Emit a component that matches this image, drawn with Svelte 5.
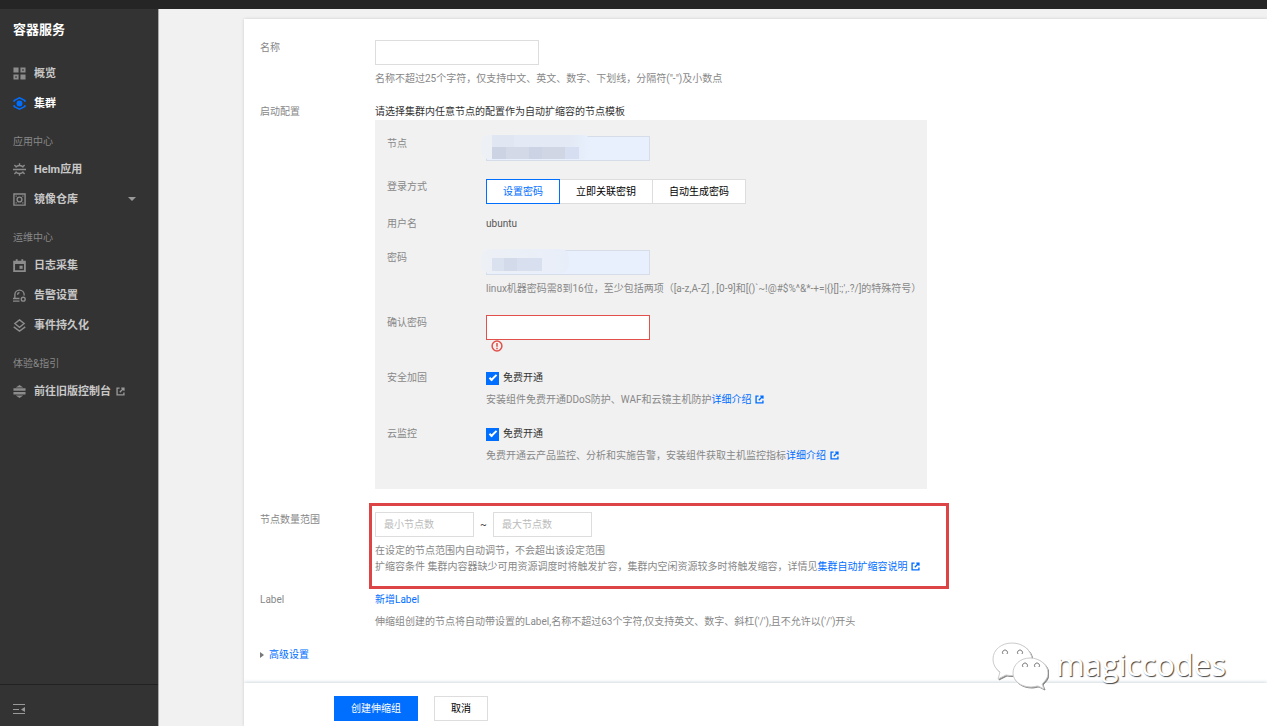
<script>
    let name = $state('');
    let node = $state('');
    let password = $state('');
    let confirmPassword = $state('');
    let loginMode = $state('password');
    let security = $state(true);
    let monitor = $state(true);
    let minNodes = $state('');
    let maxNodes = $state('');

    const navGroups = [
        {
            items: [
                { id: 'overview', label: '概览' },
                { id: 'cluster', label: '集群', active: true }
            ]
        },
        {
            title: '应用中心',
            items: [
                { id: 'helm', label: 'Helm应用' },
                { id: 'registry', label: '镜像仓库', expandable: true }
            ]
        },
        {
            title: '运维中心',
            items: [
                { id: 'log', label: '日志采集' },
                { id: 'alarm', label: '告警设置' },
                { id: 'event', label: '事件持久化' }
            ]
        },
        {
            title: '体验&指引',
            items: [{ id: 'legacy', label: '前往旧版控制台', external: true }]
        }
    ];

    const loginModes = [
        { id: 'password', label: '设置密码' },
        { id: 'key', label: '立即关联密钥' },
        { id: 'auto', label: '自动生成密码' }
    ];

    const passwordHint = "linux机器密码需8到16位，至少包括两项（[a-z,A-Z] , [0-9]和[()`~!@#$%^&*-+=|{}[]:;',.?/]的特殊符号）";
</script>

{#snippet navIcon(id)}
    <svg class="nav-icon" viewBox="0 0 14 14" aria-hidden="true">
        {#if id === 'overview'}
            <path d="M.5.5h5.500v5.500H.5zM8 8h5.500v5.500H8z" fill="currentColor" />
            <path d="M9 1.500h3.500V5H9zM1.500 9H5v3.500H1.500z" class="line thick" />
        {:else if id === 'cluster'}
            <path d="M1.200 5.500V3.800L7 .9l5.800 2.900v1.700M1.200 8.500v1.700L7 13.100l5.800-2.900V8.500" class="line" />
            <circle cx="7" cy="7" r="3.200" fill="currentColor" />
        {:else if id === 'helm'}
            <path d="M0 7h14M2.800 4.800C4.800 2 9.200 2 11.200 4.800M2.800 9.200c2 2.800 6.400 2.800 8.400 0" class="line" />
            <path d="M7 2.600V.3M7 13.700v-2.300M3.200 3.700 1.500 2.300M10.800 3.700l1.700-1.400M3.200 10.300l-1.700 1.400M10.800 10.300l1.700 1.400" class="line" />
        {:else if id === 'registry'}
            <path d="M1 1h12v12H1z" class="line" />
            <circle cx="7" cy="7" r="2.600" class="line" />
            <path d="M2.800 2.800h1.200v1.200H2.800zM10 2.800h1.200v1.200H10zM2.800 10h1.200v1.200H2.800zM10 10h1.200v1.200H10z" fill="currentColor" />
        {:else if id === 'log'}
            <path d="M1.200 3h11.600v10H1.200zM1.200 4.300h11.600M4 .3V3M10 .3V3" class="line thick" />
            <path d="M7 7.200h3.400v3.400H7z" fill="currentColor" />
        {:else if id === 'alarm'}
            <path d="M2 10V6.200a5 5 0 0 1 10 0v.8M0 10.300h7M0 13h7M5 6.200a2.200 2.200 0 0 1 2-2.300" class="line" />
            <circle cx="11" cy="11" r="2.100" class="line" />
        {:else if id === 'event'}
            <path d="M7 .9 12 4.900 7 8.900 2 4.900zM.8 8.500 7 13.100l6.200-4.600" class="line" />
        {:else}
            <path d="M3 2.600 7 0l4 2.600zM.5 3.600h13v2.700H.5zM.5 7.500h13v2.700H.5zM3 11.300h8L7 14z" fill="currentColor" />
        {/if}
    </svg>
{/snippet}

{#snippet externalIcon()}
    <svg class="external" viewBox="0 0 10 10" aria-hidden="true">
        <path d="M4 1.200H1.200v7.600h7.600V6M5.800 1.200h3v3M8.600 1.400 4.200 5.800" />
    </svg>
{/snippet}

<div class="page">
    <div class="topbar"></div>
    <div class="body">
        <aside class="sidebar">
            <h1>容器服务</h1>
            <nav>
                {#each navGroups as group}
                    {#if group.title}
                        <h2>{group.title}</h2>
                    {/if}
                    {#each group.items as item (item.id)}
                        <a href="#{item.id}" class="nav-item" class:active={item.active}>
                            {@render navIcon(item.id)}
                            <span>{item.label}</span>
                            {#if item.expandable}
                                <i class="caret"></i>
                            {/if}
                            {#if item.external}
                                {@render externalIcon()}
                            {/if}
                        </a>
                    {/each}
                {/each}
            </nav>
            <div class="sidebar-foot">
                <button type="button" class="collapse" aria-label="收起">
                    <svg viewBox="0 0 12 12" aria-hidden="true">
                        <path d="M0 1.500h12M0 6.500h6M0 10.500h12" class="line" />
                        <path d="M12 3.900v5.200L8 6.500z" fill="currentColor" />
                    </svg>
                </button>
            </div>
        </aside>

        <main>
            <form class="sheet" onsubmit={(e) => e.preventDefault()}>
                <div class="card">
                    <div class="row">
                        <label for="name">名称</label>
                        <div class="field">
                            <input id="name" type="text" class="text" bind:value={name} />
                            <p class="help">名称不超过25个字符，仅支持中文、英文、数字、下划线，分隔符("-")及小数点</p>
                        </div>
                    </div>

                    <div class="row">
                        <span class="label">启动配置</span>
                        <div class="field">
                            <p class="lead">请选择集群内任意节点的配置作为自动扩缩容的节点模板</p>
                            <div class="panel">
                                <div class="row">
                                    <label for="node">节点</label>
                                    <div class="field">
                                        <div class="masked">
                                            <input id="node" type="text" class="text filled" bind:value={node} />
                                        </div>
                                    </div>
                                </div>
                                <div class="row tight">
                                    <span class="label">登录方式</span>
                                    <div class="field">
                                        <div class="segment">
                                            {#each loginModes as mode (mode.id)}
                                                <button
                                                    type="button"
                                                    class:selected={loginMode === mode.id}
                                                    onclick={() => (loginMode = mode.id)}
                                                >{mode.label}</button>
                                            {/each}
                                        </div>
                                    </div>
                                </div>
                                <div class="row">
                                    <span class="label">用户名</span>
                                    <div class="field value">ubuntu</div>
                                </div>
                                <div class="row">
                                    <label for="password">密码</label>
                                    <div class="field">
                                        <div class="masked password-mask">
                                            <input id="password" type="password" class="text filled" bind:value={password} />
                                        </div>
                                        <p class="help">{passwordHint}</p>
                                    </div>
                                </div>
                                <div class="row">
                                    <label for="confirm">确认密码</label>
                                    <div class="field">
                                        <input id="confirm" type="password" class="text error" bind:value={confirmPassword} />
                                        <svg class="alert" viewBox="0 0 12 12" aria-hidden="true">
                                            <circle cx="6" cy="6" r="4.900" />
                                            <path d="M6 2.900v3.800M6 7.800v1.400" />
                                        </svg>
                                    </div>
                                </div>
                                <div class="row">
                                    <span class="label">安全加固</span>
                                    <div class="field">
                                        <label class="check">
                                            <input type="checkbox" bind:checked={security} />
                                            免费开通
                                        </label>
                                        <p class="help">安装组件免费开通DDoS防护、WAF和云镜主机防护<a href="#security">详细介绍{@render externalIcon()}</a></p>
                                    </div>
                                </div>
                                <div class="row">
                                    <span class="label">云监控</span>
                                    <div class="field">
                                        <label class="check">
                                            <input type="checkbox" bind:checked={monitor} />
                                            免费开通
                                        </label>
                                        <p class="help">免费开通云产品监控、分析和实施告警，安装组件获取主机监控指标<a href="#monitor">详细介绍{@render externalIcon()}</a></p>
                                    </div>
                                </div>
                            </div>
                        </div>
                    </div>

                    <div class="row">
                        <label for="min-nodes">节点数量范围</label>
                        <div class="field marked">
                            <div class="range">
                                <input id="min-nodes" type="text" class="text" placeholder="最小节点数" bind:value={minNodes} />
                                <span>~</span>
                                <input type="text" class="text" placeholder="最大节点数" aria-label="最大节点数" bind:value={maxNodes} />
                            </div>
                            <p class="help">
                                在设定的节点范围内自动调节，不会超出该设定范围<br />
                                扩缩容条件 集群内容器缺少可用资源调度时将触发扩容，集群内空闲资源较多时将触发缩容，详情见<a href="#autoscale">集群自动扩缩容说明{@render externalIcon()}</a>
                            </p>
                        </div>
                    </div>

                    <div class="row">
                        <span class="label">Label</span>
                        <div class="field">
                            <a href="#add-label" class="add">新增Label</a>
                            <p class="help">伸缩组创建的节点将自动带设置的Label,名称不超过63个字符,仅支持英文、数字、斜杠('/'),且不允许以('/')开头</p>
                        </div>
                    </div>

                    <button type="button" class="advanced"><i></i>高级设置</button>
                </div>

                <footer>
                    <button type="submit" class="btn primary">创建伸缩组</button>
                    <button type="button" class="btn">取消</button>
                </footer>
            </form>
        </main>
    </div>

    <div class="watermark">
        <svg viewBox="0 0 56 48" aria-hidden="true">
            <path d="M20 1C9 1 1 8 1 17c0 6 3 10 7 13l-2 7 8-4c10 2 25-2 26-16C39 8 31 1 20 1z" />
            <path d="M38 16c-10 0-17 7-17 15s8 14 18 14c3 0 5-1 7-1l6 3-2-5c3-3 6-6 6-11 0-8-8-15-18-15z" />
            <path class="eyes" d="M11 12a2.500 2.500 0 1 1 4 0M26 12a2.500 2.500 0 1 1 4 0M31 25a2.500 2.500 0 1 1 4 0M43 25a2.500 2.500 0 1 1 4 0" />
        </svg>
        <span>magiccodes</span>
    </div>
</div>

<style>
    :global(body) {
        margin: 0;
    }
    .page {
        position: relative;
        display: flex;
        flex-direction: column;
        min-height: 100vh;
        font-family: Roboto, "Noto Sans CJK SC", sans-serif;
        font-size: 10px;
        line-height: 16px;
        color: #333;
        background: #f1f1f1;
    }
    .page *,
    .page *::before {
        box-sizing: border-box;
    }
    h1,
    h2,
    p {
        margin: 0;
    }
    a {
        color: #006eff;
        text-decoration: none;
    }
    button,
    input {
        font: inherit;
        color: inherit;
    }
    button {
        cursor: pointer;
    }
    .line {
        fill: none;
        stroke: currentColor;
        stroke-width: 1.5;
    }
    .line.thick {
        stroke-width: 2;
    }
    .topbar {
        height: 9px;
        background: #252525;
    }
    .body {
        flex: 1;
        display: flex;
    }

    /* Sidebar */
    .sidebar {
        flex: none;
        display: flex;
        flex-direction: column;
        width: 159px;
        background: #333;
        border-right: 1px solid #aaa;
    }
    h1 {
        padding: 11px 13px 18px;
        font-size: 13px;
        line-height: 20px;
        color: #fff;
    }
    nav {
        flex: 1;
    }
    h2 {
        margin-top: 11px;
        padding-left: 13px;
        font-size: 10px;
        font-weight: 400;
        line-height: 25px;
        color: #888;
    }
    .nav-item {
        display: flex;
        align-items: center;
        height: 30px;
        padding: 0 22px 0 13px;
        font-size: 11px;
        font-weight: 700;
        color: #c8c8c8;
    }
    .nav-item span {
        padding-top: 2px;
    }
    .nav-icon {
        width: 13px;
        height: 13px;
        margin-right: 8px;
        color: #8c8c8c;
    }
    .nav-item.active {
        color: #fff;
    }
    .nav-item.active .nav-icon {
        color: #006eff;
    }
    .caret {
        margin-left: auto;
        border: 4px solid transparent;
        border-top-color: #999;
        border-bottom: 0;
    }
    .nav-item .external {
        margin-left: 5px;
        color: #999;
    }
    .sidebar-foot {
        height: 42px;
        padding: 18px 13px 0;
        border-top: 1px solid #222;
    }
    .collapse {
        display: block;
        padding: 0;
        border: 0;
        background: none;
        color: #999;
    }
    .collapse svg {
        display: block;
        width: 12px;
        height: 12px;
    }
    .collapse .line {
        stroke-width: 1;
    }

    /* Form */
    main {
        flex: 1;
        display: flex;
        padding: 10px 0 0 85px;
    }
    .sheet {
        flex: 1;
        display: flex;
        flex-direction: column;
        background: #fff;
        box-shadow: 0 0 3px rgba(0, 0, 0, 0.15);
    }
    .card {
        flex: 1;
        padding: 21px 16px 16px;
    }
    .row {
        display: flex;
        margin-bottom: 17px;
    }
    .row > label,
    .row > .label {
        flex: none;
        width: 115px;
        color: #888;
    }
    .field {
        flex: 1;
    }
    .text {
        display: block;
        width: 164px;
        height: 25px;
        padding: 0 8px;
        border: 1px solid #ddd;
        background: #fff;
    }
    .text::placeholder {
        color: #bbb;
    }
    .text.filled {
        background: #e8f0fe;
        border-color: #d6dde8;
    }
    .text.error {
        border-color: #e1504a;
    }
    .help {
        margin-top: 6px;
        color: #888;
    }
    .external {
        width: 9px;
        height: 9px;
        fill: none;
        stroke: currentColor;
        stroke-width: 1.5;
    }
    .help .external {
        margin-left: 4px;
        vertical-align: -1px;
    }
    .panel {
        max-width: 552px;
        margin-bottom: 6px;
        padding: 16px 0 7px 12px;
        background: #f1f1f1;
    }
    .panel .row {
        margin-bottom: 18px;
    }
    .panel .row > label,
    .panel .row > .label {
        width: 99px;
    }
    .panel .row.tight {
        margin-bottom: 12px;
    }
    .value {
        color: #555;
    }

    /* Pixelated cover over private values */
    .masked {
        position: relative;
        width: 164px;
    }
    .masked::before,
    .masked::after {
        content: '';
        position: absolute;
        pointer-events: none;
    }
    .masked::before {
        left: -5px;
        top: -1px;
        width: 110px;
        height: 24px;
        border-radius: 8px;
        background: linear-gradient(90deg, #edf0f5 10%, #e0e7f3 10% 30%, #e3eaf5 30% 80%, #e8f0fe);
    }
    .masked::after {
        left: 6px;
        top: 11px;
        width: 87px;
        height: 12px;
        background: linear-gradient(90deg, #ccd4e4 16%, #d3d9e6 16% 42%, #cbd3e4 42% 58%, #d0d6e4 58% 84%, #d6dff2 84%);
    }
    .password-mask::before {
        width: 88px;
        background: linear-gradient(90deg, #edf0f5, #e8eef9);
    }
    .password-mask::after {
        top: 8px;
        width: 50px;
        height: 13px;
        background: linear-gradient(90deg, #dae2f0 25%, #d3dbea 25% 50%, #d8e0f0 50%);
    }

    .segment {
        display: flex;
    }
    .segment button {
        height: 25px;
        padding: 0 16px;
        border: 1px solid #ddd;
        border-left-width: 0;
        background: #fff;
        color: #000;
    }
    .segment button.selected {
        border: 1px solid #006eff;
        color: #006eff;
    }
    .alert {
        display: block;
        width: 12px;
        height: 12px;
        margin-left: 5px;
        fill: none;
        stroke: #e1504a;
        stroke-width: 1.5;
    }
    .check {
        display: flex;
        align-items: center;
        gap: 4px;
    }
    .check input {
        appearance: none;
        width: 13px;
        height: 13px;
        margin: 0;
        border: 1px solid #aaa;
        background: #fff;
    }
    .check input:checked {
        display: grid;
        place-content: center;
        border-color: #006eff;
        background: #006eff;
    }
    .check input:checked::before {
        content: '';
        width: 8px;
        height: 4px;
        margin-bottom: 2px;
        border: solid #fff;
        border-width: 0 0 2px 2px;
        transform: rotate(-45deg);
    }
    .range {
        display: flex;
        align-items: center;
    }
    .range .text {
        width: 99px;
    }
    .range span {
        width: 19px;
        text-align: center;
    }
    .marked {
        position: relative;
    }
    .marked::after {
        content: '';
        position: absolute;
        left: -6px;
        top: -9px;
        bottom: -14px;
        width: 574px;
        border: 3px solid #dc4446;
        pointer-events: none;
    }
    .add {
        display: block;
    }
    .advanced {
        display: flex;
        align-items: center;
        gap: 5px;
        padding: 0;
        border: 0;
        background: none;
        color: #006eff;
    }
    .advanced i {
        border: 3px solid transparent;
        border-left: 4px solid #777;
        border-right: 0;
    }
    footer {
        display: flex;
        gap: 16px;
        padding: 13px 90px 5px;
        box-shadow: 0 0 4px rgba(80, 110, 130, 0.4);
        clip-path: inset(-4px 0 0 0);
    }
    .btn {
        height: 25px;
        padding: 0 16px;
        border: 1px solid #ddd;
        background: #fff;
        color: #000;
    }
    .btn.primary {
        border-color: #006eff;
        background: #006eff;
        color: #fff;
    }

    .watermark {
        position: absolute;
        right: 41px;
        bottom: 36px;
        display: flex;
        align-items: center;
        gap: 8px;
        font-family: "Open Sans", "Noto Sans", sans-serif;
        font-size: 31px;
        line-height: 40px;
        color: #fff;
        text-shadow: 1px 1px 1px #444;
        pointer-events: none;
    }
    .watermark span {
        padding-bottom: 4px;
    }
    .watermark svg {
        width: 56px;
        height: 48px;
        fill: #fff;
        stroke: #ccc;
        stroke-width: 1;
        filter: drop-shadow(1px 1px 0 #888);
    }
    .watermark .eyes {
        stroke: #777;
    }
</style>
